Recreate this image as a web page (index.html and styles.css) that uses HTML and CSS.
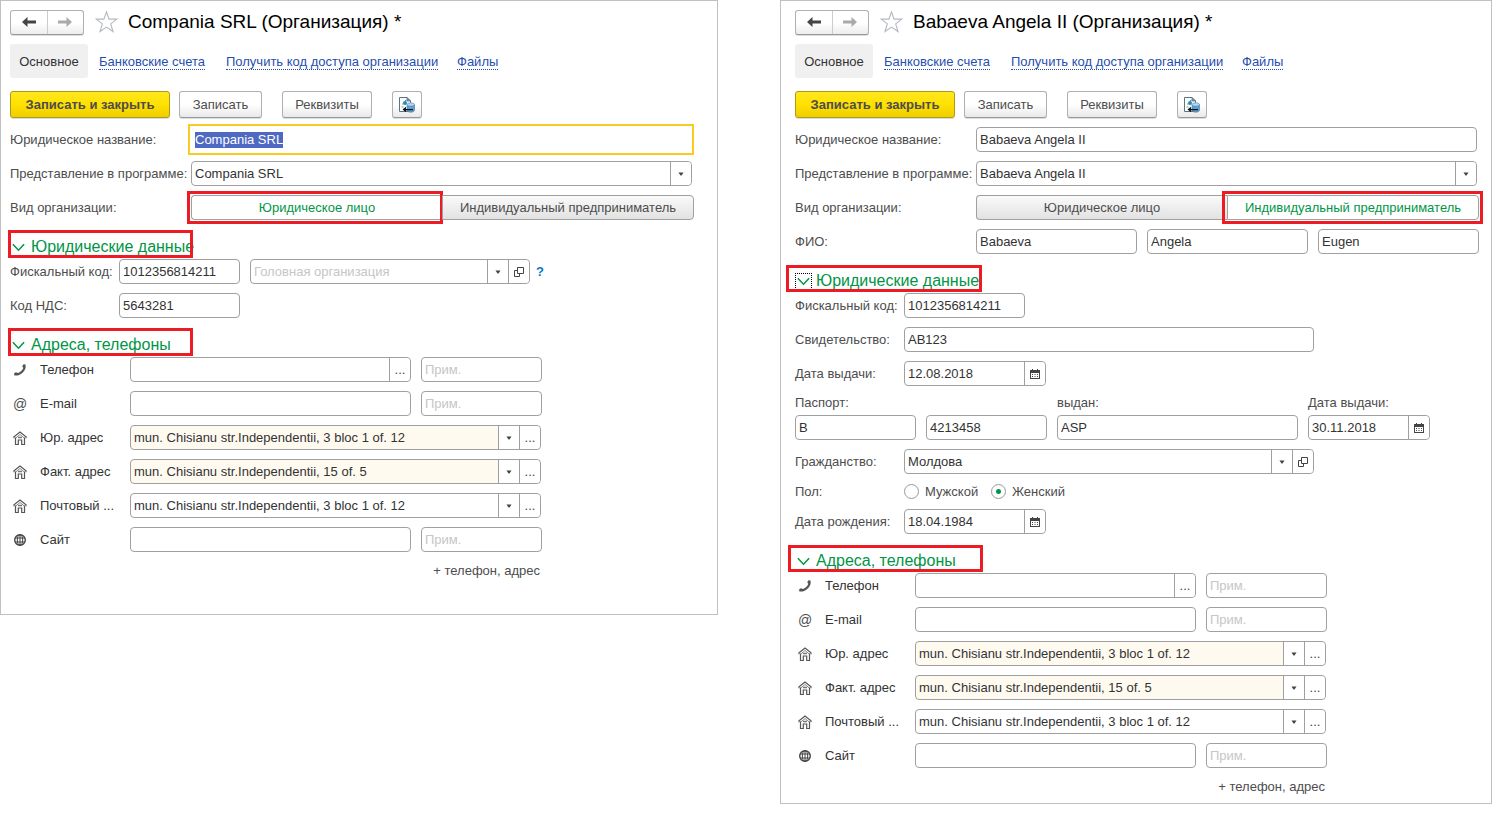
FILE: index.html
```html
<!DOCTYPE html>
<html lang="ru">
<head>
<meta charset="utf-8">
<title>Организация</title>
<link rel="stylesheet" href="styles.css">
</head>
<body>
<svg class="sprite" aria-hidden="true">
  <symbol id="back" viewBox="0 0 14 10"><path d="M0 5L5.500 0v3.500H14v3H5.500V10z" fill="currentColor"/></symbol>
  <symbol id="forward" viewBox="0 0 14 10"><path d="M14 5L8.500 0v3.500H0v3h8.500V10z" fill="currentColor"/></symbol>
  <symbol id="star" viewBox="0 0 24 24"><path d="M12 1.500l2.700 7.500h8l-6.300 5 2.400 8L12 17.300 5.200 22l2.400-8L1.300 9h8z" fill="#fff" stroke="#b4bac2" stroke-width="1.200"/></symbol>
  <symbol id="export" viewBox="0 0 16 16">
    <path d="M.5.5H8l3.500 3.500V14.500H.5z" fill="#fff" stroke="#5d7187"/><path d="M8 .5V4h3.500z" fill="#8b9cad" stroke="#5d7187" stroke-width=".8"/>
    <circle cx="6" cy="6" r="2" fill="#2388c9"/><path d="M3 7h1.500M6 3.500h1.500M2.500 10h2" stroke="#4fae55" stroke-width="1.200"/>
    <path d="M8 7.500v6c1 2.300 6.500 2.300 7.500 0v-6z" fill="#5f9fcd" stroke="#3f79a8" stroke-width=".6"/><ellipse cx="11.750" cy="7.500" rx="3.750" ry="1.700" fill="#b4d8f0" stroke="#4d88b5" stroke-width=".6"/>
    <path d="M3.500 12.500L7 9.800V12h7v1.200H7v2z" fill="#111"/>
  </symbol>
  <symbol id="caret" viewBox="0 0 6 4"><path d="M.5.500h5L3.500 3.500h-1z" fill="#444"/></symbol>
  <symbol id="open" viewBox="0 0 10 10"><path d="M3.500.5h6v6h-6z M3.500 3.500h-3v6h5v-3" fill="none" stroke="#444"/></symbol>
  <symbol id="calendar" viewBox="0 0 10 10"><path d="M0 1h10v9H0z" fill="#444"/><path d="M2 0h1v1H2zM7 0h1v1H7z" fill="#444"/><path d="M1 4h8v5H1z" fill="#fff"/><path d="M2 5.500h6M2 7.500h6" stroke="#444" stroke-dasharray="1 1.500"/></symbol>
  <symbol id="chevron" viewBox="0 0 12 8"><path d="M.8 1L6 6.500 11.200 1" fill="none" stroke="#009646" stroke-width="1.400"/></symbol>
  <symbol id="phone" viewBox="0 0 14 14"><path d="M9.300 3.200l.9-1.700 2-.3c1.400 3-.3 6.600-2.900 8.700-2.200 1.900-5.200 3.100-7.900 2.500L1 10.600 2.800 9.300l2.400.8c2.300-1.100 4.200-2.800 5.100-5z" fill="#555"/></symbol>
  <symbol id="house" viewBox="0 0 14 14"><path d="M1 7.200V5.800L7 1l6 4.800v1.400" fill="none" stroke="#555" stroke-width="1.200"/><path d="M2.500 7.200L7 3.500l4.500 3.700" fill="none" stroke="#888"/><path d="M2.500 6.500v7h2.800V9h3.400v4.500h2.800v-7" fill="none" stroke="#555" stroke-width="1.200"/><path d="M5 6.500h4" stroke="#777" stroke-width="1.500"/></symbol>
  <symbol id="globe" viewBox="0 0 14 14"><circle cx="7" cy="7" r="5.300" fill="none" stroke="#444" stroke-width="1.400"/><ellipse cx="7" cy="7" rx="2.700" ry="5.300" fill="none" stroke="#444"/><path d="M7 1v12M2 5h10M2 9h10" stroke="#444"/></symbol>
</svg>

<main class="workspace">
  <form class="card card-company">
    <header class="heading">
      <div class="history"><button type="button" aria-label="Назад"><svg><use href="#back"/></svg></button><button type="button" aria-label="Вперёд" disabled><svg><use href="#forward"/></svg></button></div>
      <button type="button" class="favorite" aria-label="Избранное"><svg><use href="#star"/></svg></button>
      <h1>Compania SRL (Организация) *</h1>
    </header>
    <nav class="tabs">
      <span class="tab-current">Основное</span>
      <span class="tab-bank"><a href="#">Банковские счета</a></span>
      <span class="tab-code"><a href="#">Получить код доступа организации</a></span>
      <span><a href="#">Файлы</a></span>
    </nav>
    <div class="commands">
      <button type="button" class="btn btn-primary">Записать и закрыть</button>
      <button type="button" class="btn btn-save">Записать</button>
      <button type="button" class="btn btn-details">Реквизиты</button>
      <button type="button" class="btn btn-icon" aria-label="Выгрузить"><svg><use href="#export"/></svg></button>
    </div>
    <div class="rows">
      <div class="row main-row"><label for="a-name">Юридическое название:</label><div class="field field-focus"><input id="a-name" value="Compania SRL"></div></div>
      <div class="row main-row"><label for="a-view">Представление в программе:</label><div class="field"><input id="a-view" value="Compania SRL"><button type="button" aria-label="Выбрать"><svg class="i-caret"><use href="#caret"/></svg></button></div></div>
      <div class="row main-row"><span>Вид организации:</span><div class="switch"><button type="button" class="selected">Юридическое лицо<i class="mark mark-first"></i></button><button type="button">Индивидуальный предприниматель</button></div></div>
    </div>

    <h2 class="group"><button type="button"><svg><use href="#chevron"/></svg>Юридические данные</button><i class="mark mark-group"></i></h2>
    <div class="rows">
      <div class="row data-row"><label for="a-fiscal">Фискальный код:</label>
        <div class="line"><div class="field w-short"><input id="a-fiscal" value="1012356814211"></div>
        <div class="field w-head"><input aria-label="Головная организация" placeholder="Головная организация"><button type="button" aria-label="Выбрать"><svg class="i-caret"><use href="#caret"/></svg></button><button type="button" aria-label="Открыть"><svg class="i-small"><use href="#open"/></svg></button></div>
        <a class="help" href="#">?</a></div></div>
      <div class="row data-row"><label for="a-vat">Код НДС:</label><div class="line"><div class="field w-short"><input id="a-vat" value="5643281"></div></div></div>
    </div>

    <h2 class="group"><button type="button"><svg><use href="#chevron"/></svg>Адреса, телефоны</button><i class="mark mark-group"></i></h2>
    <div class="contacts rows">
      <div class="row contact"><svg><use href="#phone"/></svg><label for="a-phone">Телефон</label><div class="field"><input id="a-phone"><button type="button">...</button></div><div class="field"><input placeholder="Прим." aria-label="Примечание к телефону"></div></div>
      <div class="row contact"><span class="at">@</span><label for="a-mail">E-mail</label><div class="field"><input id="a-mail"></div><div class="field"><input placeholder="Прим." aria-label="Примечание к почте"></div></div>
      <div class="row contact"><svg><use href="#house"/></svg><label for="a-legal">Юр. адрес</label><div class="field field-long tinted"><input id="a-legal" value="mun. Chisianu str.Independentii, 3 bloc 1 of. 12"><button type="button" aria-label="Выбрать"><svg class="i-caret"><use href="#caret"/></svg></button><button type="button">...</button></div></div>
      <div class="row contact"><svg><use href="#house"/></svg><label for="a-fact">Факт. адрес</label><div class="field field-long tinted"><input id="a-fact" value="mun. Chisianu str.Independentii, 15 of. 5"><button type="button" aria-label="Выбрать"><svg class="i-caret"><use href="#caret"/></svg></button><button type="button">...</button></div></div>
      <div class="row contact"><svg><use href="#house"/></svg><label for="a-post">Почтовый ...</label><div class="field field-long"><input id="a-post" value="mun. Chisianu str.Independentii, 3 bloc 1 of. 12"><button type="button" aria-label="Выбрать"><svg class="i-caret"><use href="#caret"/></svg></button><button type="button">...</button></div></div>
      <div class="row contact"><svg><use href="#globe"/></svg><label for="a-site">Сайт</label><div class="field"><input id="a-site"></div><div class="field"><input placeholder="Прим." aria-label="Примечание к сайту"></div></div>
      <button type="button" class="add">+ телефон, адрес</button>
    </div>
  </form>

  <form class="card card-person">
    <header class="heading">
      <div class="history"><button type="button" aria-label="Назад"><svg><use href="#back"/></svg></button><button type="button" aria-label="Вперёд" disabled><svg><use href="#forward"/></svg></button></div>
      <button type="button" class="favorite" aria-label="Избранное"><svg><use href="#star"/></svg></button>
      <h1>Babaeva Angela II (Организация) *</h1>
    </header>
    <nav class="tabs">
      <span class="tab-current">Основное</span>
      <span class="tab-bank"><a href="#">Банковские счета</a></span>
      <span class="tab-code"><a href="#">Получить код доступа организации</a></span>
      <span><a href="#">Файлы</a></span>
    </nav>
    <div class="commands">
      <button type="button" class="btn btn-primary">Записать и закрыть</button>
      <button type="button" class="btn btn-save">Записать</button>
      <button type="button" class="btn btn-details">Реквизиты</button>
      <button type="button" class="btn btn-icon" aria-label="Выгрузить"><svg><use href="#export"/></svg></button>
    </div>
    <div class="rows">
      <div class="row main-row"><label for="b-name">Юридическое название:</label><div class="field"><input id="b-name" value="Babaeva Angela II"></div></div>
      <div class="row main-row"><label for="b-view">Представление в программе:</label><div class="field"><input id="b-view" value="Babaeva Angela II"><button type="button" aria-label="Выбрать"><svg class="i-caret"><use href="#caret"/></svg></button></div></div>
      <div class="row main-row"><span>Вид организации:</span><div class="switch"><button type="button">Юридическое лицо</button><button type="button" class="selected">Индивидуальный предприниматель<i class="mark mark-last"></i></button></div></div>
      <div class="row main-row"><label for="b-last">ФИО:</label><div class="names"><div class="field"><input id="b-last" value="Babaeva"></div><div class="field"><input aria-label="Имя" value="Angela"></div><div class="field"><input aria-label="Отчество" value="Eugen"></div></div></div>
    </div>

    <h2 class="group"><button type="button"><svg class="dotted"><use href="#chevron"/></svg>Юридические данные</button><i class="mark mark-group"></i></h2>
    <div class="rows">
      <div class="row data-row"><label for="b-fiscal">Фискальный код:</label><div class="line"><div class="field w-short"><input id="b-fiscal" value="1012356814211"></div></div></div>
      <div class="row data-row"><label for="b-cert">Свидетельство:</label><div class="line"><div class="field w-long"><input id="b-cert" value="AB123"></div></div></div>
      <div class="row data-row"><label for="b-issued">Дата выдачи:</label><div class="line"><div class="field w-date"><input id="b-issued" value="12.08.2018"><button type="button" aria-label="Календарь"><svg class="i-small"><use href="#calendar"/></svg></button></div></div></div>
      <div class="passport">
        <label class="passport-series" for="b-series">Паспорт:</label><label for="b-by">выдан:</label><label for="b-passdate">Дата выдачи:</label>
        <div class="field"><input id="b-series" value="B"></div>
        <div class="field"><input aria-label="Номер паспорта" value="4213458"></div>
        <div class="field"><input id="b-by" value="ASP"></div>
        <div class="field"><input id="b-passdate" value="30.11.2018"><button type="button" aria-label="Календарь"><svg class="i-small"><use href="#calendar"/></svg></button></div>
      </div>
      <div class="row data-row"><label for="b-country">Гражданство:</label><div class="line"><div class="field w-long"><input id="b-country" value="Молдова"><button type="button" aria-label="Выбрать"><svg class="i-caret"><use href="#caret"/></svg></button><button type="button" aria-label="Открыть"><svg class="i-small"><use href="#open"/></svg></button></div></div></div>
      <div class="row data-row gender"><span>Пол:</span><div class="line"><label class="radio radio-male"><input type="radio" name="gender">Мужской</label><label class="radio"><input type="radio" name="gender" checked>Женский</label></div></div>
      <div class="row data-row"><label for="b-birth">Дата рождения:</label><div class="line"><div class="field w-date"><input id="b-birth" value="18.04.1984"><button type="button" aria-label="Календарь"><svg class="i-small"><use href="#calendar"/></svg></button></div></div></div>
    </div>

    <h2 class="group"><button type="button"><svg><use href="#chevron"/></svg>Адреса, телефоны</button><i class="mark mark-group mark-low"></i></h2>
    <div class="contacts rows">
      <div class="row contact"><svg><use href="#phone"/></svg><label for="b-phone">Телефон</label><div class="field"><input id="b-phone"><button type="button">...</button></div><div class="field"><input placeholder="Прим." aria-label="Примечание к телефону"></div></div>
      <div class="row contact"><span class="at">@</span><label for="b-mail">E-mail</label><div class="field"><input id="b-mail"></div><div class="field"><input placeholder="Прим." aria-label="Примечание к почте"></div></div>
      <div class="row contact"><svg><use href="#house"/></svg><label for="b-legal">Юр. адрес</label><div class="field field-long tinted"><input id="b-legal" value="mun. Chisianu str.Independentii, 3 bloc 1 of. 12"><button type="button" aria-label="Выбрать"><svg class="i-caret"><use href="#caret"/></svg></button><button type="button">...</button></div></div>
      <div class="row contact"><svg><use href="#house"/></svg><label for="b-fact">Факт. адрес</label><div class="field field-long tinted"><input id="b-fact" value="mun. Chisianu str.Independentii, 15 of. 5"><button type="button" aria-label="Выбрать"><svg class="i-caret"><use href="#caret"/></svg></button><button type="button">...</button></div></div>
      <div class="row contact"><svg><use href="#house"/></svg><label for="b-post">Почтовый ...</label><div class="field field-long"><input id="b-post" value="mun. Chisianu str.Independentii, 3 bloc 1 of. 12"><button type="button" aria-label="Выбрать"><svg class="i-caret"><use href="#caret"/></svg></button><button type="button">...</button></div></div>
      <div class="row contact"><svg><use href="#globe"/></svg><label for="b-site">Сайт</label><div class="field"><input id="b-site"></div><div class="field"><input placeholder="Прим." aria-label="Примечание к сайту"></div></div>
      <button type="button" class="add">+ телефон, адрес</button>
    </div>
  </form>
</main>
<script src="form.js"></script>
</body>
</html>
```
FILE: styles.css
```css
* { box-sizing: border-box; }
body { margin: 0; background: #fff; color: #4d4d4d; font: 13px/16px "Liberation Sans", Arial, sans-serif; }
button, input { font: inherit; color: inherit; margin: 0; }
button { background: none; border: 0; padding: 0; }
.sprite { display: none; }

.workspace { display: grid; grid-template-columns: 718fr 712fr; gap: 62px; align-items: start; padding-right: 13px; }
.card { border: 1px solid #c0c0c0; padding: 8px 23px 35px 9px; min-width: 0; }
.card-person { padding: 8px 12px 8px 14px; }

.heading { display: flex; align-items: center; height: 26px; }
.history { display: flex; width: 74px; height: 25px; border: 1px solid #b0b0b0; border-bottom-color: #999; border-radius: 3px; background: linear-gradient(#fff 50%, #ededed); box-shadow: 0 1px 0 #ddd; }
.history button { flex: 1; display: grid; place-items: center; color: #444; }
.history button + button { border-left: 1px solid #ccc; color: #aaa; }
.history svg { width: 14px; height: 10px; }
.favorite { margin: 0 10px 0 11px; }
.favorite svg { display: block; width: 23px; height: 24px; }
h1 { margin: 0; font-size: 19px; line-height: 24px; font-weight: 400; color: #000; white-space: nowrap; }

.tabs { display: flex; align-items: center; margin-top: 9px; height: 34px; line-height: 18px; white-space: nowrap; }
.tabs span { padding-top: 1px; }
.tabs .tab-current { width: 78px; margin-right: 11px; padding: 9px 0 7px; text-align: center; background: #f0f0f0; border-radius: 3px; color: #333; }
.tab-bank { width: 127px; }
.tab-code { width: 231px; }
.tabs a { color: #1f4fae; text-decoration: none; border-bottom: 1px dotted #1f4fae; }

.commands { display: flex; margin: 13px 0 9px; height: 27px; }
.btn { height: 27px; border: 1px solid #b0b0b0; border-bottom-color: #999; border-radius: 3px; background: linear-gradient(#fff 50%, #e9e9e9); box-shadow: 0 1px 0 #ddd; }
.btn-primary { width: 160px; margin-right: 9px; background: linear-gradient(#ffe820, #ffe000 50%, #efce00); border-color: #b09a10; font-weight: 700; }
.btn-save { width: 83px; margin-right: 20px; }
.btn-details { width: 90px; margin-right: 20px; }
.btn-icon { width: 30px; display: grid; place-items: center; }
.btn-icon svg { width: 16px; height: 16px; }

.rows { display: flex; flex-direction: column; gap: 9px; }
.row { display: grid; align-items: center; min-height: 25px; white-space: nowrap; }
.main-row { grid-template-columns: 181px 1fr; }
.main-row > .field { margin-right: 2px; }
.data-row { grid-template-columns: 109px 1fr; }
.line { display: flex; align-items: center; }

.field { display: flex; height: 25px; min-width: 0; border: 1px solid #a0a0a0; border-radius: 4px; background: #fff; }
.field input { flex: 1; width: 100%; min-width: 0; padding: 0 3px; border: 0; outline: 0; background: none; color: #333; }
.field input::placeholder { color: #c6c6c6; opacity: 1; }
.field input::selection { background: #4f69c3; color: #fff; }
.field button { flex: none; width: 21px; display: grid; place-items: center; border-left: 1px solid #a0a0a0; background: #fff; color: #444; }
.field button:last-child { border-radius: 0 4px 4px 0; }
.main-row > .field-focus { margin-right: 3px; border-color: #fff; outline: 2px solid #fbca1f; outline-offset: 1px; border-radius: 0; }
.tinted { background: #fffaf0; }
.i-caret { width: 6px; height: 4px; }
.i-small { width: 10px; height: 10px; }
.w-short { width: 121px; }
.w-head { width: 280px; margin-left: 10px; }
.w-long { width: 410px; }
.w-date { width: 142px; }
.help { margin-left: 6px; color: #0a78c8; text-decoration: none; font-weight: 700; }

.switch { display: flex; height: 25px; }
.switch button { position: relative; flex: 1; border: 1px solid #a0a0a0; border-radius: 0 4px 4px 0; background: linear-gradient(#fafafa, #e2e2e2); }
.switch button:first-child { border-radius: 4px 0 0 4px; border-right: 0; }
.switch .selected { background: #fff; color: #009646; }
.names { display: grid; grid-template-columns: repeat(3, 1fr); gap: 10px; }

/* callout frames over the form */
.mark { position: absolute; border: 3px solid #ed1c24; pointer-events: none; }
.mark-first { inset: -5px -1px -5px -5px; }
.mark-last { inset: -5px -5px -5px -6px; }
.mark-group { inset: -3px auto 1px -2px; width: 185px; }
.card-person .mark-group { top: -2px; left: -9px; width: 196px; }
.card-person .mark-low { left: -7px; width: 195px; }

.group { position: relative; margin: 13px 0 0; height: 26px; font-size: 16px; line-height: 26px; font-weight: 400; color: #009646; white-space: nowrap; }
.group button { display: flex; align-items: center; gap: 4px; line-height: 28px; }
.group svg { width: 17px; height: 17px; padding: 4px 2px; }
.group .dotted { border: 1px dotted #000; padding: 3px 1px; }

.passport { display: grid; grid-template-columns: 121px 121px 241px 122px; column-gap: 10px; row-gap: 4px; }
.passport-series { grid-column: span 2; }
.gender { min-height: 17px; }
.radio { display: flex; align-items: center; gap: 6px; }
.radio-male { width: 87px; }
.radio input { appearance: none; width: 15px; height: 15px; border: 1px solid #999; border-radius: 50%; background: #fff; }
.radio input:checked { background: radial-gradient(circle, #009646 2px, #fff 3px); }

.contacts { width: 532px; max-width: 100%; }
.contact { grid-template-columns: 30px 90px 281px 1fr; }
.contact > svg { width: 14px; height: 14px; margin-left: 3px; }
.contact label { color: #333; }
.contact .field + .field { margin-left: 10px; }
.contact .field-long { grid-column: 3 / 5; margin-right: 1px; }
.at { margin-left: 3px; font-size: 14px; }
.add { align-self: flex-end; margin: 2px 2px 0 0; line-height: 16px; }
```
FILE: form.js
```js
const nameInput = document.getElementById("a-name");
nameInput.focus();
nameInput.select();
```
